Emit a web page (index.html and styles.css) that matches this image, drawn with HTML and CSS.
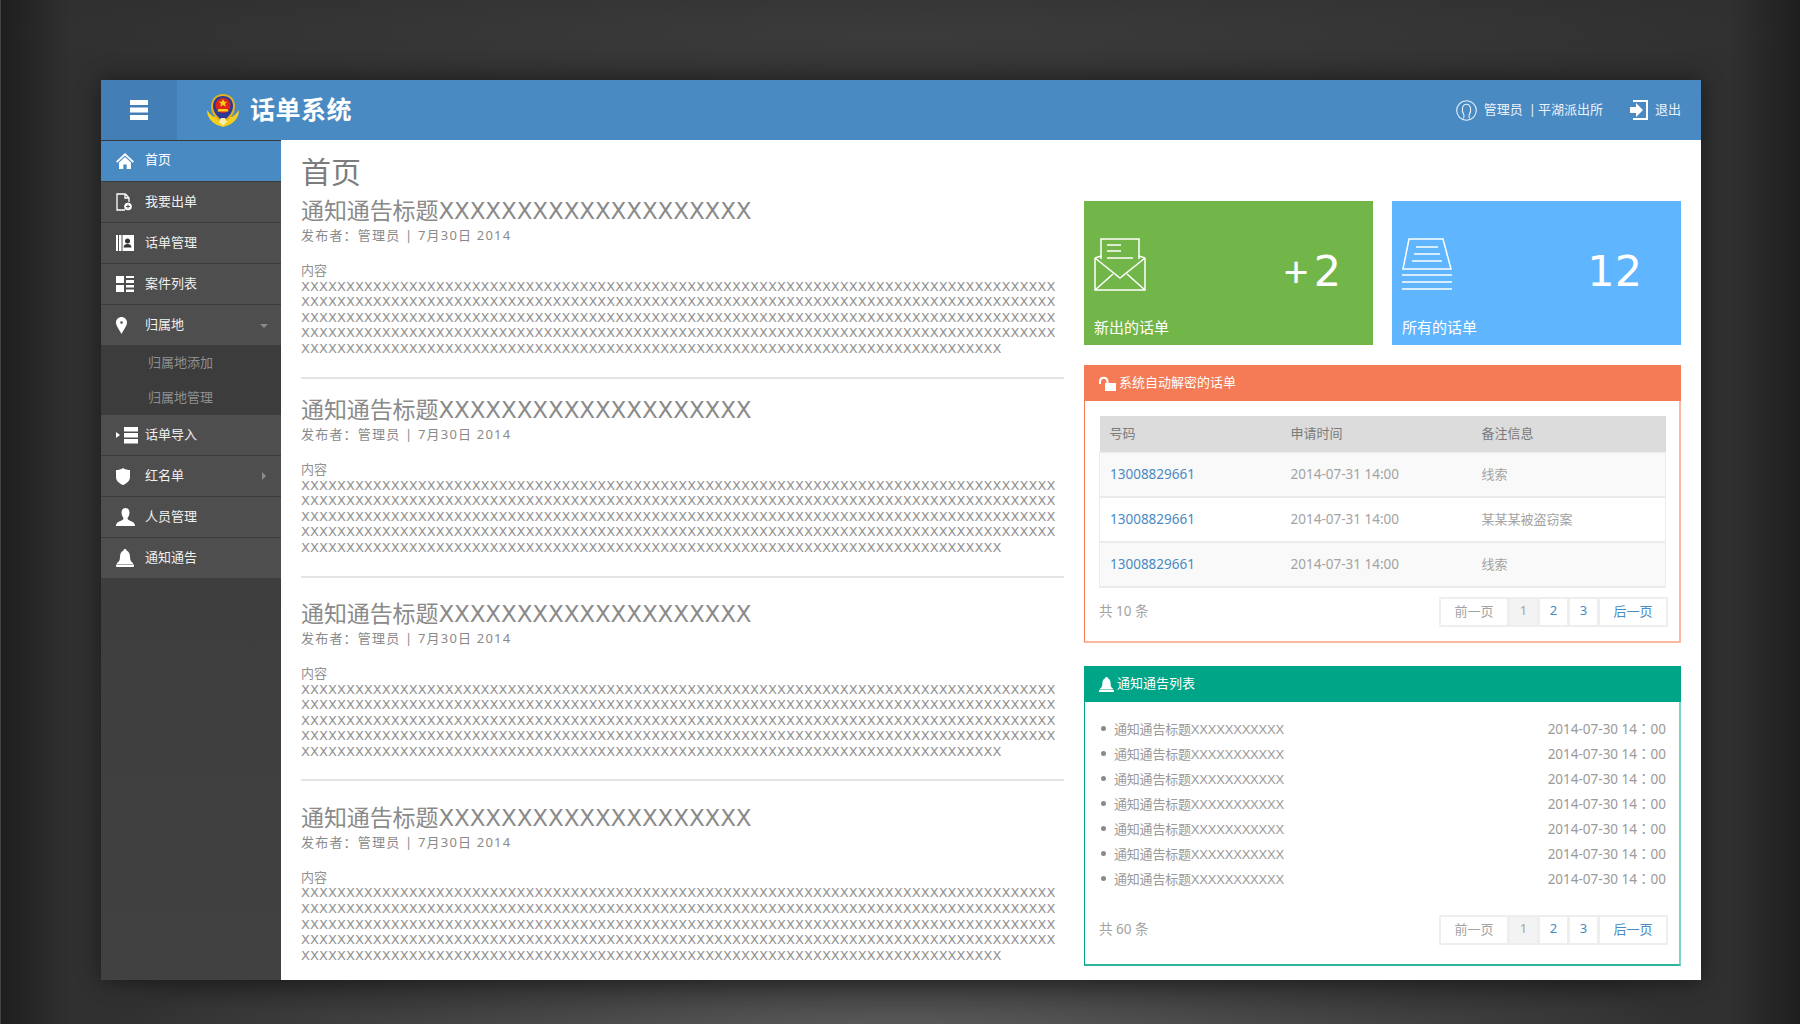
FILE: index.html
```html
<!DOCTYPE html>
<html lang="zh-CN">
<head>
<meta charset="utf-8">
<title>话单系统</title>
<link rel="stylesheet" href="styles.css">
</head>
<body>
<div class="app">
  <header class="topbar">
    <div class="toggle">
      <svg width="18" height="20" viewBox="0 0 18 20"><rect width="18" height="5" fill="#fff"/><rect y="7.500" width="18" height="5" fill="#fff"/><rect y="15" width="18" height="5" fill="#fff"/></svg>
    </div>
    <div class="brand">
      <svg class="emblem" width="32" height="33" viewBox="0 0 32 33">
        <path d="M0 16C0 26 8 31 16 33 24 31 32 26 32 16 30 19 28 21 25 23L7 23C4 21 2 19 0 16z" fill="#f6cf1e"/>
        <path d="M4 12C4 5 9 0 16 0s12 5 12 12c0 7-4 13-12 17C8 25 4 19 4 12z" fill="#e6b41a"/>
        <path d="M6 12C6 6 10 2 16 2s10 4 10 10c0 6-4 11-10 15C10 23 6 18 6 12z" fill="#2b3a98"/>
        <circle cx="16" cy="11.500" r="7.500" fill="#e0261b"/>
        <path d="M16 5l1.300 2.800h3l-2.400 2 1 2.900-2.900-1.700-2.900 1.700 1-2.900-2.400-2h3z" fill="#f7d21c"/>
        <path d="M11.500 15h9l1 2.500h-11z" fill="#f7d21c"/>
        <path d="M14 24h4l2 4-4 3.500-4-3.500z" fill="#f8eeb4"/>
      </svg>
      <span class="brand-name">话单系统</span>
    </div>
    <div class="top-right">
      <svg class="user-icon" width="21" height="21" viewBox="0 0 21 21" fill="none" stroke="#e8f1f8" stroke-width="1.100"><circle cx="10.500" cy="10.500" r="9.800"/><path d="M7.500 18.500c.7-1.500 1-2.500.2-4C6.500 12.500 6 10.500 6.500 8c.5-2.500 2-3.800 4-3.800s3.500 1.300 4 3.800c.5 2.500 0 4.500-1.200 6.500-.8 1.500-.5 2.500.2 4"/></svg>
      <span>管理员</span><span class="sep">|</span><span>平湖派出所</span>
      <svg class="exit-icon" width="18" height="20" viewBox="0 0 18 20"><path d="M3 0h15v20H3v-2h13V2H3z" fill="#fff"/><path d="M0 7h6V3l7 7-7 7v-4H0z" fill="#fff"/></svg>
      <span>退出</span>
    </div>
  </header>
  <div class="main">
    <nav class="sidebar">
      <a class="nav-item active">
        <span class="nav-icon"><svg width="18" height="18" viewBox="0 0 18 18"><path d="M9 1L0 9.500l1.200 1.300L9 3.500l7.800 7.300L18 9.500z" fill="#fff"/><path d="M9 5l-6 5.500V17h4.300v-4.500h3.400V17H15v-6.500z" fill="#fff"/></svg></span>
        首页
      </a>
      <a class="nav-item">
        <span class="nav-icon"><svg width="16" height="18" viewBox="0 0 16 18" fill="none"><path d="M9.500 1H1v16h8M9.500 1L13 5v4M9 1v4h4" stroke="#fff" stroke-width="1.300"/><circle cx="12" cy="13.500" r="3.800" fill="#fff"/><path d="M10 13.500h4M12 11.500v4" stroke="#4e4e4e"/></svg></span>
        我要出单
      </a>
      <a class="nav-item">
        <span class="nav-icon"><svg width="18" height="18" viewBox="0 0 18 18"><rect x="0" y="1" width="2" height="16" fill="#fff"/><rect x="3" y="1" width="15" height="16" fill="#fff"/><rect x="5.500" y="1" width="1" height="16" fill="#4e4e4e"/><circle cx="11.500" cy="7" r="2.500" fill="#333"/><path d="M7.500 13.500c0-2.500 2-3.500 4-3.500s4 1 4 3.500z" fill="#333"/></svg></span>
        话单管理
      </a>
      <a class="nav-item">
        <span class="nav-icon"><svg width="18" height="18" viewBox="0 0 18 18" fill="#fff"><rect y="1" width="8" height="7"/><rect y="10" width="8" height="7"/><rect x="10" y="1" width="8" height="2"/><rect x="10" y="5" width="8" height="3"/><rect x="10" y="10" width="8" height="2.500"/><rect x="10" y="14.500" width="8" height="2.500"/></svg></span>
        案件列表
      </a>
      <a class="nav-item open">
        <span class="nav-icon"><svg width="11" height="17" viewBox="0 0 11 17"><path fill-rule="evenodd" d="M5.500 0C2.500 0 0 2.400 0 5.500 0 9 3.500 13 5.500 17 7.500 13 11 9 11 5.500 11 2.400 8.500 0 5.500 0zm0 4.200a1.300 1.300 0 110 2.600 1.300 1.300 0 010-2.600z" fill="#fff"/></svg></span>
        归属地
        <span class="caret-down"></span>
      </a>
      <div class="sub">
        <a class="sub-item">归属地添加</a>
        <a class="sub-item">归属地管理</a>
      </div>
      <a class="nav-item">
        <span class="nav-icon"><svg width="22" height="18" viewBox="0 0 22 18" fill="#fff"><path d="M0 6l4 3-4 3z"/><rect x="8" y="1" width="14" height="4.500"/><rect x="8" y="7" width="14" height="4.500"/><rect x="8" y="13" width="14" height="4.500"/></svg></span>
        话单导入
      </a>
      <a class="nav-item">
        <span class="nav-icon"><svg width="14" height="17" viewBox="0 0 14 17"><path d="M7 0c2 1.500 4.500 2 7 2v7c0 4-3.500 6.500-7 8-3.500-1.500-7-4-7-8V2c2.500 0 5-.5 7-2z" fill="#fff"/></svg></span>
        红名单
        <span class="caret-right"></span>
      </a>
      <a class="nav-item">
        <span class="nav-icon"><svg width="19" height="18" viewBox="0 0 19 18"><path d="M9.500 0c2.500 0 4 2 4 4.500s-1 4.500-2 5.500c0 1.500 1 2 3 3s4.500 1.500 4.500 5H0c0-3.500 2.500-4 4.500-5s3-1.500 3-3c-1-1-2-3-2-5.500S7 0 9.500 0z" fill="#fff"/></svg></span>
        人员管理
      </a>
      <a class="nav-item last">
        <span class="nav-icon"><svg width="18" height="18" viewBox="0 0 18 18"><path d="M9 0c1 0 1.500.7 1.500 1.500C13 2.500 14 5 14 8c0 3 1 5 3 6v1H1v-1c2-1 3-3 3-6 0-3 1-5.500 3.500-6.500C7.500.7 8 0 9 0z" fill="#fff"/><path d="M0 15.500h18V17a1 1 0 01-1 1H1a1 1 0 01-1-1z" fill="#fff"/></svg></span>
        通知通告
      </a>
    </nav>
    <main class="content">
      <section class="feed">
        <h1 class="page-title">首页</h1>
        <article class="notice">
          <h2 class="notice-title">通知通告标题XXXXXXXXXXXXXXXXXXXX</h2>
          <p class="notice-meta">发布者：管理员 | 7月30日 2014</p>
          <div class="notice-body">内容<br>XXXXXXXXXXXXXXXXXXXXXXXXXXXXXXXXXXXXXXXXXXXXXXXXXXXXXXXXXXXXXXXXXXXXXXXXXXXXXXXXXXXX<br>XXXXXXXXXXXXXXXXXXXXXXXXXXXXXXXXXXXXXXXXXXXXXXXXXXXXXXXXXXXXXXXXXXXXXXXXXXXXXXXXXXXX<br>XXXXXXXXXXXXXXXXXXXXXXXXXXXXXXXXXXXXXXXXXXXXXXXXXXXXXXXXXXXXXXXXXXXXXXXXXXXXXXXXXXXX<br>XXXXXXXXXXXXXXXXXXXXXXXXXXXXXXXXXXXXXXXXXXXXXXXXXXXXXXXXXXXXXXXXXXXXXXXXXXXXXXXXXXXX<br>XXXXXXXXXXXXXXXXXXXXXXXXXXXXXXXXXXXXXXXXXXXXXXXXXXXXXXXXXXXXXXXXXXXXXXXXXXXXXX</div>
        </article>
        <article class="notice">
          <h2 class="notice-title">通知通告标题XXXXXXXXXXXXXXXXXXXX</h2>
          <p class="notice-meta">发布者：管理员 | 7月30日 2014</p>
          <div class="notice-body">内容<br>XXXXXXXXXXXXXXXXXXXXXXXXXXXXXXXXXXXXXXXXXXXXXXXXXXXXXXXXXXXXXXXXXXXXXXXXXXXXXXXXXXXX<br>XXXXXXXXXXXXXXXXXXXXXXXXXXXXXXXXXXXXXXXXXXXXXXXXXXXXXXXXXXXXXXXXXXXXXXXXXXXXXXXXXXXX<br>XXXXXXXXXXXXXXXXXXXXXXXXXXXXXXXXXXXXXXXXXXXXXXXXXXXXXXXXXXXXXXXXXXXXXXXXXXXXXXXXXXXX<br>XXXXXXXXXXXXXXXXXXXXXXXXXXXXXXXXXXXXXXXXXXXXXXXXXXXXXXXXXXXXXXXXXXXXXXXXXXXXXXXXXXXX<br>XXXXXXXXXXXXXXXXXXXXXXXXXXXXXXXXXXXXXXXXXXXXXXXXXXXXXXXXXXXXXXXXXXXXXXXXXXXXXX</div>
        </article>
        <article class="notice">
          <h2 class="notice-title">通知通告标题XXXXXXXXXXXXXXXXXXXX</h2>
          <p class="notice-meta">发布者：管理员 | 7月30日 2014</p>
          <div class="notice-body">内容<br>XXXXXXXXXXXXXXXXXXXXXXXXXXXXXXXXXXXXXXXXXXXXXXXXXXXXXXXXXXXXXXXXXXXXXXXXXXXXXXXXXXXX<br>XXXXXXXXXXXXXXXXXXXXXXXXXXXXXXXXXXXXXXXXXXXXXXXXXXXXXXXXXXXXXXXXXXXXXXXXXXXXXXXXXXXX<br>XXXXXXXXXXXXXXXXXXXXXXXXXXXXXXXXXXXXXXXXXXXXXXXXXXXXXXXXXXXXXXXXXXXXXXXXXXXXXXXXXXXX<br>XXXXXXXXXXXXXXXXXXXXXXXXXXXXXXXXXXXXXXXXXXXXXXXXXXXXXXXXXXXXXXXXXXXXXXXXXXXXXXXXXXXX<br>XXXXXXXXXXXXXXXXXXXXXXXXXXXXXXXXXXXXXXXXXXXXXXXXXXXXXXXXXXXXXXXXXXXXXXXXXXXXXX</div>
        </article>
        <article class="notice">
          <h2 class="notice-title">通知通告标题XXXXXXXXXXXXXXXXXXXX</h2>
          <p class="notice-meta">发布者：管理员 | 7月30日 2014</p>
          <div class="notice-body">内容<br>XXXXXXXXXXXXXXXXXXXXXXXXXXXXXXXXXXXXXXXXXXXXXXXXXXXXXXXXXXXXXXXXXXXXXXXXXXXXXXXXXXXX<br>XXXXXXXXXXXXXXXXXXXXXXXXXXXXXXXXXXXXXXXXXXXXXXXXXXXXXXXXXXXXXXXXXXXXXXXXXXXXXXXXXXXX<br>XXXXXXXXXXXXXXXXXXXXXXXXXXXXXXXXXXXXXXXXXXXXXXXXXXXXXXXXXXXXXXXXXXXXXXXXXXXXXXXXXXXX<br>XXXXXXXXXXXXXXXXXXXXXXXXXXXXXXXXXXXXXXXXXXXXXXXXXXXXXXXXXXXXXXXXXXXXXXXXXXXXXXXXXXXX<br>XXXXXXXXXXXXXXXXXXXXXXXXXXXXXXXXXXXXXXXXXXXXXXXXXXXXXXXXXXXXXXXXXXXXXXXXXXXXXX</div>
        </article>
      </section>
      <aside class="side">
        <div class="cards">
          <div class="card card-green">
            <div class="card-top">
              <svg width="52" height="53" viewBox="0 0 52 53" fill="none" stroke="#fff" stroke-width="1.500"><path d="M7 21V1h38v20M1 20v32h50V20M1 20l25 20 25-20M1 52l18-16M51 52L33 36M7 18l-6 2M45 18l6 2"/><path d="M13 7h14M13 13h14M13 20h26" stroke-width="1.500"/></svg>
              <span class="card-num"><span class="plus">+</span>2</span>
            </div>
            <div class="card-label">新出的话单</div>
          </div>
          <div class="card card-blue">
            <div class="card-top">
              <svg width="50" height="53" viewBox="0 0 50 53" fill="none" stroke="#fff" stroke-width="1.500"><path d="M1 31L7 1h34l8 30z"/><path d="M14 9h22M12 16h26M10 23h30M0 37h50M0 44h50M0 51h50"/></svg>
              <span class="card-num">12</span>
            </div>
            <div class="card-label">所有的话单</div>
          </div>
        </div>
        <div class="panel panel-orange">
          <div class="panel-head">
            <svg width="17" height="15" viewBox="0 0 17 15"><path d="M1 8V5a3.800 3.800 0 017.500 0v2" fill="none" stroke="#fff" stroke-width="2"/><rect x="6" y="7" width="11" height="8" fill="#fff"/></svg>
            <span class="head-text">系统自动解密的话单</span>
          </div>
          <div class="panel-body">
            <table class="grid">
              <thead><tr><th class="c1">号码</th><th class="c2">申请时间</th><th>备注信息</th></tr></thead>
              <tbody>
                <tr class="odd"><td><a class="link">13008829661</a></td><td>2014-07-31 14:00</td><td>线索</td></tr>
                <tr><td><a class="link">13008829661</a></td><td>2014-07-31 14:00</td><td>某某某被盗窃案</td></tr>
                <tr class="odd"><td><a class="link">13008829661</a></td><td>2014-07-31 14:00</td><td>线索</td></tr>
              </tbody>
            </table>
            <div class="pager-row">
              <span class="total">共 10 条</span>
              <div class="pager"><a class="pg wide">前一页</a><a class="pg cur">1</a><a class="pg on">2</a><a class="pg on">3</a><a class="pg wide on">后一页</a></div>
            </div>
          </div>
        </div>
        <div class="panel panel-green">
          <div class="panel-head">
            <svg width="15" height="15" viewBox="0 0 18 18"><path d="M9 0c1 0 1.500.7 1.500 1.500C13 2.500 14 5 14 8c0 3 1 5 3 6v1H1v-1c2-1 3-3 3-6 0-3 1-5.500 3.500-6.500C7.500.7 8 0 9 0z" fill="#fff"/><path d="M0 15.500h18V17a1 1 0 01-1 1H1a1 1 0 01-1-1z" fill="#fff"/></svg>
            <span class="head-text">通知通告列表</span>
          </div>
          <div class="panel-body body-list">
            <ul class="list">
              <li><span class="dot"></span><span class="li-text">通知通告标题XXXXXXXXXXX</span><span class="li-date">2014-07-30 14：00</span></li>
              <li><span class="dot"></span><span class="li-text">通知通告标题XXXXXXXXXXX</span><span class="li-date">2014-07-30 14：00</span></li>
              <li><span class="dot"></span><span class="li-text">通知通告标题XXXXXXXXXXX</span><span class="li-date">2014-07-30 14：00</span></li>
              <li><span class="dot"></span><span class="li-text">通知通告标题XXXXXXXXXXX</span><span class="li-date">2014-07-30 14：00</span></li>
              <li><span class="dot"></span><span class="li-text">通知通告标题XXXXXXXXXXX</span><span class="li-date">2014-07-30 14：00</span></li>
              <li><span class="dot"></span><span class="li-text">通知通告标题XXXXXXXXXXX</span><span class="li-date">2014-07-30 14：00</span></li>
              <li><span class="dot"></span><span class="li-text">通知通告标题XXXXXXXXXXX</span><span class="li-date">2014-07-30 14：00</span></li>
            </ul>
            <div class="pager-row">
              <span class="total">共 60 条</span>
              <div class="pager"><a class="pg wide">前一页</a><a class="pg cur">1</a><a class="pg on">2</a><a class="pg on">3</a><a class="pg wide on">后一页</a></div>
            </div>
          </div>
        </div>
      </aside>
    </main>
  </div>
</div>
</body>
</html>
```

FILE: styles.css
```css
* { box-sizing: border-box; }
html, body { height: 100%; }
body {
  margin: 0;
  width: 1800px;
  height: 1024px;
  overflow: hidden;
  padding: 80px 99px 44px 101px;
  font-family: "Noto Sans", "Noto Sans CJK SC", sans-serif;
  background:
    radial-gradient(ellipse 800px 115px at 50% 1040px, #5e5e5e 0%, rgba(94,94,94,0) 100%),
    radial-gradient(ellipse 820px 50px at 50% 980px, rgba(14,14,14,.85) 0%, rgba(14,14,14,0) 100%),
    radial-gradient(ellipse 900px 60px at 50% 34px, rgba(66,66,66,.6) 0%, rgba(66,66,66,0) 100%),
    linear-gradient(90deg, #444 0, #444 1px, #1e1e1e 1px, #303030 70px, #323232 900px, #303030 1730px, #1e1e1e 1800px);
  color: #8a8a8a;
}
.app {
  width: 1600px;
  height: 900px;
  display: flex;
  flex-direction: column;
  box-shadow: 0 0 22px rgba(0, 0, 0, .45);
}
.topbar {
  height: 60px;
  flex: none;
  display: flex;
  align-items: center;
  background: #4a8ac3;
  color: #fff;
}
.toggle {
  width: 76px;
  height: 60px;
  display: flex;
  align-items: center;
  justify-content: center;
  background: #437fb4;
}
.brand { display: flex; align-items: center; margin-left: 30px; }
.emblem { margin-right: 11px; margin-top: 1px; }
.brand-name { font-size: 25px; font-weight: 700; letter-spacing: .5px; color: #fff; padding-bottom: 4px; }
.top-right {
  margin-left: auto;
  padding-right: 20px;
  display: flex;
  align-items: center;
  font-size: 13px;
  color: #eaf2f9;
}
.top-right span { padding-bottom: 3px; }
.top-right .sep { margin: 0 2px 0 6px; }
.user-icon { margin-right: 7px; }
.exit-icon { margin: 0 7px 0 27px; }
.main { flex: 1; display: flex; min-height: 0; }
.sidebar {
  width: 180px;
  flex: none;
  background: linear-gradient(#3a3a3a, #414141);
  border-top: 1px solid #3a3a3a;
}
.nav-item {
  height: 41px;
  padding: 0 0 3px 44px;
  position: relative;
  display: flex;
  align-items: center;
  font-size: 13px;
  color: #f0f0f0;
  background: #4e4e4e;
  border-bottom: 1px solid #3c3c3c;
}
.nav-item.active { background: #4a8ac3; color: #fff; padding-bottom: 5px; }
.nav-item.open { border-bottom: 0; height: 40px; }
.nav-item.last { height: 40px; border-bottom: 0; }
.nav-icon {
  position: absolute;
  left: 15px;
  top: 0;
  bottom: 0;
  display: flex;
  align-items: center;
}
.caret-down {
  position: absolute;
  right: 13px;
  top: 19px;
  border: 4px solid transparent;
  border-top-color: #8a8a8a;
  border-bottom-width: 0;
}
.caret-right {
  position: absolute;
  right: 15px;
  top: 16px;
  border: 4px solid transparent;
  border-left-color: #8a8a8a;
  border-right-width: 0;
}
.sub { background: #3c3c3c; height: 70px; }
.sub-item {
  height: 35px;
  display: flex;
  align-items: center;
  padding: 0 0 3px 47px;
  font-size: 13px;
  color: #8f8f8f;
}
.content {
  flex: 1;
  background: #fff;
  display: flex;
  padding: 0 20px 0 20px;
  min-width: 0;
}
.feed { width: 763px; flex: none; margin-right: 20px; }
.page-title {
  margin: 0;
  font-size: 30px;
  font-weight: 400;
  line-height: 40px;
  height: 56px;
  padding-top: 12px;
  color: #7c7c7c;
}
.notice { border-bottom: 2px solid #e4e4e4; padding-bottom: 20px; margin-bottom: 21.400px; }
.notice:first-of-type { margin-bottom: 16.400px; }
.notice:last-child { border-bottom: 0; margin-bottom: 0; padding-bottom: 0; }
.notice-title {
  margin: 0;
  font-family: "DejaVu Sans", "Noto Sans CJK SC", sans-serif;
  font-size: 23px;
  font-weight: 400;
  line-height: 30px;
  letter-spacing: -.1px;
  color: #8a8a8a;
}
.notice-meta {
  margin: 0 0 19px;
  font-family: "Noto Sans", "Noto Sans CJK TC", sans-serif;
  font-size: 13px;
  line-height: 18px;
  letter-spacing: 1.200px;
  color: #8a8a8a;
}
.notice-body {
  font-family: "DejaVu Sans", "Noto Sans CJK SC", sans-serif;
  font-size: 13px;
  line-height: 15.600px;
  letter-spacing: .075px;
  color: #929292;
  white-space: nowrap;
}
.side { width: 597px; flex: none; padding-top: 61px; }
.cards { display: flex; justify-content: space-between; height: 144px; }
.card { width: 289px; padding: 37px 10px 0; color: #fff; display: flex; flex-direction: column; }
.card-green { background: #72b64a; }
.card-blue { background: #5fb6fe; }
.card-top { display: flex; align-items: flex-start; justify-content: space-between; height: 53px; }
.card-num {
  font-family: "DejaVu Sans", sans-serif;
  font-size: 43px;
  line-height: 53px;
  padding: 7px 22px 0 0;
  display: flex;
  align-items: center;
}
.card-blue .card-num { padding-right: 29px; }
.plus { font-family: "Noto Sans", sans-serif; font-size: 44px; margin-right: 5px; }
.card-label { font-size: 15px; margin-top: 26px; line-height: 20px; }
.panel { margin-top: 20px; }
.panel-green { margin-top: 23px; }
.panel-head {
  height: 36px;
  display: flex;
  align-items: center;
  padding-left: 15px;
  font-size: 13px;
  color: #fff;
}
.head-text { margin-left: 3px; padding-bottom: 4px; }
.panel-body { padding: 15px 13px 0 14px; border-style: solid; border-width: 0 2px 2px 1px; }
.panel-orange .panel-head { background: #f47b55; }
.panel-orange .panel-body { border-color: #fbb9a2; border-left-color: #f47b55; height: 242px; }
.panel-green .panel-head { background: #00a587; }
.panel-green .panel-body { border-color: #7fd2c3; border-left-color: #00a587; border-bottom-color: #2eb59c; height: 264px; }
.grid {
  width: 567px;
  border-collapse: collapse;
  table-layout: fixed;
  font-size: 13.500px;
}
.grid th {
  background: #dcdcdc;
  height: 36px;
  text-align: left;
  font-weight: 400;
  font-size: 13px;
  padding: 0 10px 2px;
  color: #7a7a7a;
}
.grid th.c1 { width: 181px; }
.grid th.c2 { width: 191px; }
.grid td { height: 45px; padding: 0 10px 1px; border-top: 1px solid #ebebeb; border-bottom: 2px solid #ebebeb; color: #a3a3a3; }
.grid td:first-child { border-left: 1px solid #ebebeb; }
.grid td:last-child { border-right: 1px solid #ebebeb; font-size: 13px; padding-bottom: 2px; }
.grid .odd td { background: #f9f9f9; }
.link { color: #4a8ac3; }
.pager-row { display: flex; align-items: center; justify-content: space-between; margin: 9px -2px 0 0; }
.total { font-size: 13.500px; color: #a3a3a3; padding-bottom: 4px; }
.pager { display: flex; height: 30px; }
.pg {
  width: 31px;
  display: flex;
  align-items: center;
  justify-content: center;
  font-size: 13px;
  padding-bottom: 4px;
  color: #a3a3a3;
  border: 2px solid #eeeeee;
  margin-left: -1px;
}
.pg.wide { width: 70px; }
.pg.on { color: #4a8ac3; }
.pg.cur { background: #f3f3f3; }
.body-list { padding-top: 14px; }
.list { list-style: none; margin: 0 0 24px; padding: 0; }
.list li { height: 25px; display: flex; align-items: center; font-size: 13px; color: #9a9a9a; }
.dot { width: 5px; height: 5px; border-radius: 50%; background: #8a8a8a; margin: 0 8px 0 2px; flex: none; }
.li-text {
  flex: 1;
  font-family: "Liberation Sans", "Noto Sans CJK SC", sans-serif;
  letter-spacing: -.2px;
}
.li-date { font-family: "Noto Sans", "Noto Sans CJK TC", sans-serif; font-size: 13.500px; color: #9a9a9a; padding-bottom: 2px; }
```
